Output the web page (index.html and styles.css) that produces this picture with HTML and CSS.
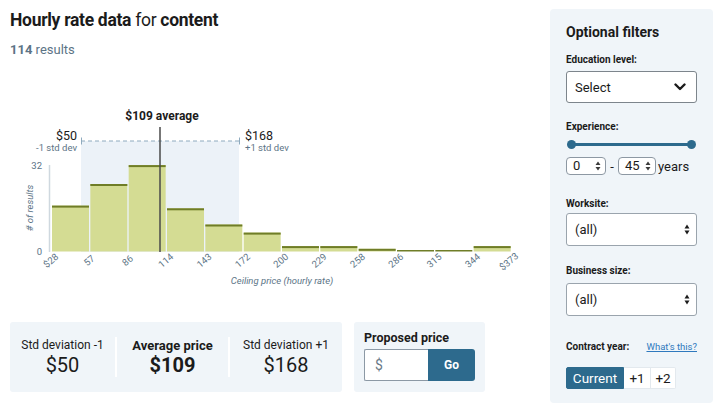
FILE: index.html
```html
<!DOCTYPE html>
<html>
<head>
<meta charset="utf-8">
<link rel="stylesheet" href="styles.css">
</head>
<body>
<div class="page">
  <main class="main">
    <h1 class="title"><b>Hourly rate data</b> for <b>content</b></h1>
    <p class="count"><b>114</b> results</p>
    <svg class="chart" width="531" height="252" viewBox="10 58 531 252">
      <rect class="sd-band" x="81" y="141" width="158" height="111"/>
      <line class="sd-dash" x1="81" y1="141" x2="239" y2="141"/>
      <line class="sd-tick" x1="81.5" y1="137.5" x2="81.5" y2="144.5"/>
      <line class="sd-tick" x1="239.5" y1="137.5" x2="239.5" y2="144.5"/>
      <text class="sd-val" x="77" y="140" text-anchor="end">$50</text>
      <text class="sd-sub" x="77" y="151" text-anchor="end">-1 std dev</text>
      <text class="sd-val" x="245" y="140">$168</text>
      <text class="sd-sub" x="245" y="151">+1 std dev</text>
      <text class="avg-label" x="162" y="120" text-anchor="middle">$109 average</text>
      <line class="y-axis" x1="49.5" y1="165" x2="49.5" y2="252"/>
      <text class="axis-num" x="42" y="168.5" text-anchor="end">32</text>
      <text class="axis-num" x="42" y="255" text-anchor="end">0</text>
      <text class="axis-title" transform="translate(33,208) rotate(-90)" text-anchor="middle"># of results</text>

      <rect class="bar" x="52" y="205.6" width="37" height="45.9"/>
      <rect class="bar-top" x="52" y="205.6" width="37" height="2"/>
      <rect class="bar" x="90.33" y="184" width="37" height="67.5"/>
      <rect class="bar-top" x="90.33" y="184" width="37" height="2"/>
      <rect class="bar" x="128.67" y="165.1" width="37" height="86.4"/>
      <rect class="bar-top" x="128.67" y="165.1" width="37" height="2"/>
      <rect class="bar" x="167" y="208.3" width="37" height="43.2"/>
      <rect class="bar-top" x="167" y="208.3" width="37" height="2"/>
      <rect class="bar" x="205.33" y="224.5" width="37" height="27"/>
      <rect class="bar-top" x="205.33" y="224.5" width="37" height="2"/>
      <rect class="bar" x="243.67" y="232.6" width="37" height="18.9"/>
      <rect class="bar-top" x="243.67" y="232.6" width="37" height="2"/>
      <rect class="bar" x="282" y="246.1" width="37" height="5.4"/>
      <rect class="bar-top" x="282" y="246.1" width="37" height="2"/>
      <rect class="bar" x="320.33" y="246.1" width="37" height="5.4"/>
      <rect class="bar-top" x="320.33" y="246.1" width="37" height="2"/>
      <rect class="bar" x="358.67" y="248.8" width="37" height="2.7"/>
      <rect class="bar-top" x="358.67" y="248.8" width="37" height="2"/>
      <rect class="bar-top" x="397" y="250" width="37" height="1.5"/>
      <rect class="bar-top" x="435.33" y="250" width="37" height="1.5"/>
      <rect class="bar" x="473.67" y="246.1" width="37" height="5.4"/>
      <rect class="bar-top" x="473.67" y="246.1" width="37" height="2"/>

      <line class="avg-line" x1="160" y1="127" x2="160" y2="252"/>

      <text class="tick" transform="translate(53,263) rotate(-40)" text-anchor="middle">$28</text>
      <text class="tick" transform="translate(91.3,263) rotate(-40)" text-anchor="middle">57</text>
      <text class="tick" transform="translate(129.7,263) rotate(-40)" text-anchor="middle">86</text>
      <text class="tick" transform="translate(168,263) rotate(-40)" text-anchor="middle">114</text>
      <text class="tick" transform="translate(206.3,263) rotate(-40)" text-anchor="middle">143</text>
      <text class="tick" transform="translate(244.7,263) rotate(-40)" text-anchor="middle">172</text>
      <text class="tick" transform="translate(283,263) rotate(-40)" text-anchor="middle">200</text>
      <text class="tick" transform="translate(321.3,263) rotate(-40)" text-anchor="middle">229</text>
      <text class="tick" transform="translate(359.7,263) rotate(-40)" text-anchor="middle">258</text>
      <text class="tick" transform="translate(398,263) rotate(-40)" text-anchor="middle">286</text>
      <text class="tick" transform="translate(436.3,263) rotate(-40)" text-anchor="middle">315</text>
      <text class="tick" transform="translate(474.7,263) rotate(-40)" text-anchor="middle">344</text>
      <text class="tick" transform="translate(511,264) rotate(-40)" text-anchor="middle">$373</text>

      <text class="axis-title" x="282" y="284" text-anchor="middle">Ceiling price (hourly rate)</text>
    </svg>

    <div class="summary">
      <div class="stats">
        <div class="stat">
          <div class="stat-label">Std deviation -1</div>
          <div class="stat-value">$50</div>
        </div>
        <div class="divider"></div>
        <div class="stat stat-main">
          <div class="stat-label">Average price</div>
          <div class="stat-value">$109</div>
        </div>
        <div class="divider"></div>
        <div class="stat">
          <div class="stat-label">Std deviation +1</div>
          <div class="stat-value">$168</div>
        </div>
      </div>
      <div class="proposed">
        <div class="proposed-label">Proposed price</div>
        <div class="proposed-form">
          <span class="price-input">$</span>
          <button class="go" type="button">Go</button>
        </div>
      </div>
    </div>
  </main>

  <aside class="filters">
    <h2 class="filters-title">Optional filters</h2>

    <div class="label label-edu">Education level:</div>
    <div class="select">
      <span>Select</span>
      <svg class="chevron" width="12" height="8" viewBox="0 0 12 8"><polyline points="1.5,1.5 6,6 10.5,1.5"/></svg>
    </div>

    <div class="label label-exp">Experience:</div>
    <div class="slider">
      <span class="knob"></span>
      <span class="track"></span>
      <span class="knob"></span>
    </div>
    <div class="range-row">
      <div class="num num-a"><span>0</span><svg class="spin" width="6" height="10" viewBox="0 0 6 10"><path d="M0.5 4 L3 0.5 L5.5 4 Z M0.5 6 L3 9.5 L5.5 6 Z"/></svg></div>
      <span class="dash">-</span>
      <div class="num num-b"><span>45</span><svg class="spin" width="6" height="10" viewBox="0 0 6 10"><path d="M0.5 4 L3 0.5 L5.5 4 Z M0.5 6 L3 9.5 L5.5 6 Z"/></svg></div>
      <span class="years">years</span>
    </div>

    <div class="label label-work">Worksite:</div>
    <div class="select select-tall">
      <span>(all)</span>
      <svg class="updown" width="6" height="11" viewBox="0 0 6 11"><path d="M0.5 4.5 L3 0.5 L5.5 4.5 Z M0.5 6.5 L3 10.5 L5.5 6.5 Z"/></svg>
    </div>

    <div class="label label-biz">Business size:</div>
    <div class="select select-tall">
      <span>(all)</span>
      <svg class="updown" width="6" height="11" viewBox="0 0 6 11"><path d="M0.5 4.5 L3 0.5 L5.5 4.5 Z M0.5 6.5 L3 10.5 L5.5 6.5 Z"/></svg>
    </div>

    <div class="contract-row">
      <span class="label">Contract year:</span>
      <a class="help" href="#">What's this?</a>
    </div>
    <div class="segmented">
      <span class="seg seg-active">Current</span>
      <span class="seg">+1</span>
      <span class="seg">+2</span>
    </div>
  </aside>
</div>
</body>
</html>
```

FILE: styles.css
```css
* { box-sizing: border-box; }

html, body {
  margin: 0;
  padding: 0;
  background: #ffffff;
}

body {
  font-family: Roboto, "Liberation Sans", sans-serif;
  color: #1b1b1b;
}

.page {
  display: flex;
  align-items: flex-start;
  padding-left: 10px;
  width: 717px;
  height: 406px;
  overflow: hidden;
}

.main {
  width: 531px;
  flex: none;
}

.title {
  margin: 8px 0 0 0;
  font-size: 17.5px;
  letter-spacing: -0.3px;
  line-height: 24px;
  font-weight: 400;
  color: #1b1b1b;
}

.title b { font-weight: 700; }

.count {
  margin: 10px 0 0 0;
  font-size: 13px;
  line-height: 16px;
  color: #5c7486;
}

.count b { font-weight: 700; }

.chart {
  display: block;
  margin-top: 0;
}

.sd-band { fill: #ecf2f8; }
.sd-dash { stroke: #8eaabe; stroke-width: 1; stroke-dasharray: 4 3; }
.sd-tick { stroke: #8eaabe; stroke-width: 1; }
.sd-val { font-family: Roboto, sans-serif; font-size: 12.5px; fill: #1b1b1b; }
.sd-sub { font-family: Roboto, sans-serif; font-size: 9.5px; fill: #5c7486; }
.avg-label { font-family: Roboto, sans-serif; font-size: 12px; font-weight: 700; fill: #1b1b1b; }
.y-axis { stroke: #cfd8df; stroke-width: 1.5; }
.axis-num { font-family: Roboto, sans-serif; font-size: 9.5px; fill: #5c7486; }
.axis-title { font-family: Roboto, sans-serif; font-size: 9.5px; font-style: italic; fill: #5c7486; }
.tick { font-family: Roboto, sans-serif; font-size: 9.5px; fill: #5c7486; }
.bar { fill: #d4dc93; }
.bar-top { fill: #6f7d27; }
.avg-line { stroke: #4a4a4a; stroke-width: 1.5; }

.summary {
  display: flex;
  gap: 12px;
  margin-top: 12px;
}

.stats {
  width: 332px;
  height: 70px;
  background: #f0f5f9;
  border-radius: 3px;
  display: grid;
  grid-template-columns: 105px 2px 111px 2px 1fr;
  align-items: center;
}

.stat {
  text-align: center;
}

.stat-label {
  font-size: 12px;
  line-height: 15px;
  color: #1b1b1b;
}

.stat-value {
  margin-top: 1px;
  font-size: 20px;
  line-height: 22px;
  color: #1b1b1b;
}

.stat-main .stat-label {
  font-size: 13px;
}

.stat-main .stat-label,
.stat-main .stat-value {
  font-weight: 700;
}

.divider {
  width: 2px;
  height: 40px;
  background: #ffffff;
}

.proposed {
  width: 131px;
  height: 70px;
  background: #f0f5f9;
  border-radius: 3px;
  padding: 8px 10px 0 10px;
}

.proposed-label {
  font-size: 12.5px;
  line-height: 15px;
  font-weight: 700;
  color: #1b1b1b;
}

.proposed-form {
  display: flex;
  margin-top: 4px;
  height: 32px;
}

.price-input {
  width: 64px;
  height: 32px;
  background: #ffffff;
  border: 1px solid #8c99a5;
  border-right: none;
  border-radius: 2px 0 0 2px;
  font-size: 14px;
  line-height: 30px;
  padding-left: 10px;
  color: #6b7b88;
}

.go {
  width: 47px;
  height: 32px;
  border: none;
  margin: 0;
  padding: 0;
  background: #2d6a8d;
  color: #ffffff;
  font-family: Roboto, sans-serif;
  font-size: 12px;
  font-weight: 700;
  border-radius: 0 3px 3px 0;
}

.filters {
  flex: none;
  width: 163px;
  height: 394px;
  margin-left: 9px;
  margin-top: 9px;
  background: #f0f5f9;
  border-radius: 4px;
  padding: 14px 16px 0 16px;
}

.filters-title {
  margin: 0;
  font-size: 14px;
  line-height: 18px;
  font-weight: 700;
  color: #1b1b1b;
}

.label {
  font-size: 10px;
  line-height: 14px;
  font-weight: 700;
  color: #1b1b1b;
}

.label-edu { margin-top: 12px; }
.label-exp { margin-top: 17px; }
.label-work { margin-top: 22px; }
.label-biz { margin-top: 18px; }

.select {
  display: flex;
  align-items: center;
  justify-content: space-between;
  height: 32px;
  margin-top: 4px;
  background: #ffffff;
  border: 1px solid #7d858c;
  border-radius: 3px;
  padding: 0 10px 0 8px;
  font-size: 13px;
  color: #1b1b1b;
}

.select-tall {
  height: 33px;
  margin-top: 2px;
  border-color: #9aa4ad;
  padding-right: 6px;
}

.label-biz + .select { margin-top: 5px; }

.chevron polyline {
  fill: none;
  stroke: #1b1b1b;
  stroke-width: 2.4;
  stroke-linecap: round;
  stroke-linejoin: round;
}

.updown path { fill: #1b1b1b; }

.slider {
  display: flex;
  align-items: center;
  height: 12px;
  margin-top: 4px;
  padding: 0 1px;
}

.knob {
  width: 9px;
  height: 9px;
  border-radius: 50%;
  background: #2d6a8d;
  flex: none;
}

.track {
  flex: 1;
  height: 3px;
  margin: 0 -2px;
  background: #2d6a8d;
}

.range-row {
  display: flex;
  align-items: center;
  margin-top: 7px;
  height: 18px;
  font-size: 13px;
}

.num {
  display: flex;
  align-items: center;
  justify-content: space-between;
  height: 18px;
  background: #ffffff;
  border: 1px solid #8d98a3;
  border-radius: 4px;
  padding: 0 4px 0 6px;
  font-size: 13px;
  line-height: 16px;
}

.num-a { width: 40px; }
.num-b { width: 38px; padding-left: 6px; }

.spin path { fill: #3b3b3b; }

.dash {
  width: 12px;
  text-align: center;
  color: #1b1b1b;
}

.years {
  margin-left: 2px;
  color: #1b1b1b;
}

.contract-row {
  display: flex;
  justify-content: space-between;
  align-items: baseline;
  margin-top: 24px;
  line-height: 14px;
}

.help {
  font-size: 9.5px;
  color: #2f79be;
  text-decoration: underline;
}

.segmented {
  display: flex;
  margin-top: 13px;
  height: 22px;
}

.seg {
  display: flex;
  align-items: center;
  justify-content: center;
  height: 22px;
  background: #ffffff;
  border: 1px solid #e3e9ee;
  font-size: 13.5px;
  color: #1b1b1b;
  width: 27px;
}

.seg + .seg { border-left: none; }

.seg-active {
  width: 58px;
  background: #2d6a8d;
  border-color: #2d6a8d;
  color: #ffffff;
  border-radius: 2px 0 0 2px;
}

.seg:last-child {
  width: 25px;
  border-radius: 0 2px 2px 0;
}
```
